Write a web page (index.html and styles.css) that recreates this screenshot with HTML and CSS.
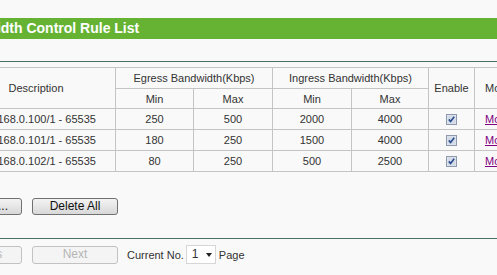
FILE: index.html
```html
<!DOCTYPE html>
<html lang="en">
  <head>
    <meta charset="UTF-8" />
    <meta name="viewport" content="width=device-width, initial-scale=1.0" />
    <title>Bandwidth Control Rule List</title>
    <link rel="stylesheet" href="styles.css">
  </head>
  <body>
    <div class="rule-list-container">
      <h1 class="title-bar">Bandwidth Control Rule List</h1>
      <div class="divider top-divider"></div>

      <table class="rule-table">
        <colgroup>
          <col style="width: 20px" />
          <col style="width: 159px" />
          <col style="width: 78px" />
          <col style="width: 79px" />
          <col style="width: 79px" />
          <col style="width: 77px" />
          <col style="width: 46px" />
          <col style="width: 60px" />
        </colgroup>
        <thead>
          <tr class="head-top">
            <th rowspan="2">ID</th>
            <th rowspan="2">Description</th>
            <th colspan="2">Egress Bandwidth(Kbps)</th>
            <th colspan="2">Ingress Bandwidth(Kbps)</th>
            <th rowspan="2">Enable</th>
            <th rowspan="2" class="left-cell">Modify</th>
          </tr>
          <tr class="head-sub">
            <th>Min</th>
            <th>Max</th>
            <th>Min</th>
            <th>Max</th>
          </tr>
        </thead>
        <tbody id="ruleRows"></tbody>
      </table>

      <div class="button-row">
        <button type="button" class="btn">Add New...</button>
        <button type="button" class="btn">Delete All</button>
      </div>

      <div class="divider bottom-divider"></div>

      <div class="pager-row">
        <button type="button" class="btn" disabled>Previous</button>
        <button type="button" class="btn" disabled>Next</button>
        <span class="pager-label">Current No.</span>
        <span class="page-select">1<span class="select-arrow"></span></span>
        <span class="pager-label">Page</span>
      </div>
    </div>

    <script>
      const rules = [
        { id: 1, desc: "192.168.0.100/1 - 65535", eMin: 250, eMax: 500, iMin: 2000, iMax: 4000 },
        { id: 2, desc: "192.168.0.101/1 - 65535", eMin: 180, eMax: 250, iMin: 1500, iMax: 4000 },
        { id: 3, desc: "192.168.0.102/1 - 65535", eMin: 80, eMax: 250, iMin: 500, iMax: 2500 },
      ];

      const checkIcon =
        '<svg class="check-box" width="11" height="11" viewBox="0 0 11 11">' +
        '<rect x="0.5" y="0.5" width="10" height="10" fill="#e4e8f0" stroke="#8e99ab"/>' +
        '<rect x="1.5" y="1.5" width="8" height="8" fill="#d3dbe8"/>' +
        '<path d="M2.8 5.4 L4.6 7.4 L8.2 2.8" fill="none" stroke="#2b4c8c" stroke-width="1.6"/>' +
        "</svg>";

      const body = document.getElementById("ruleRows");
      rules.forEach((r) => {
        const tr = document.createElement("tr");
        tr.innerHTML =
          `<td>${r.id}</td><td>${r.desc}</td>` +
          `<td>${r.eMin}</td><td>${r.eMax}</td>` +
          `<td>${r.iMin}</td><td>${r.iMax}</td>` +
          `<td>${checkIcon}</td>` +
          `<td class="left-cell"><a href="#" class="link">Modify</a></td>`;
        body.appendChild(tr);
      });
    </script>
  </body>
</html>
```

FILE: styles.css
```css
html,
body {
  margin: 0;
  background-color: #f9f9f9;
  overflow: hidden;
}
body {
  font-family: "Liberation Sans", Arial, sans-serif;
  color: #333333;
}
.rule-list-container {
  margin-left: -64px;
  padding-top: 18px;
  width: 640px;
}
.title-bar {
  margin: 0;
  height: 21px;
  line-height: 21px;
  padding-left: 15px;
  background-color: #66b334;
  color: #ffffff;
  font-size: 14px;
  font-weight: bold;
}
.divider {
  height: 1px;
  background-color: #47705e;
}
.top-divider {
  margin-top: 22px;
}
.bottom-divider {
  margin-top: 23px;
}
.rule-table {
  margin-top: 5px;
  border-collapse: collapse;
  table-layout: fixed;
  width: 598px;
  font-size: 11px;
  color: #333333;
}
.rule-table th,
.rule-table td {
  border: 1px solid #c4c4c4;
  padding: 0;
  text-align: center;
  font-weight: normal;
  white-space: nowrap;
  overflow: hidden;
}
.rule-table .head-top th {
  height: 20px;
}
.rule-table .head-sub th {
  height: 19px;
}
.rule-table td {
  height: 20px;
}
.rule-table .left-cell {
  text-align: left;
  padding-left: 10px;
}
.check-box {
  display: block;
  margin: 0 auto;
}
.link {
  color: #800080;
  text-decoration: underline;
}
.button-row {
  margin-top: 26px;
  display: flex;
  gap: 10px;
}
.btn {
  width: 86px;
  height: 17px;
  padding: 0;
  border: 1px solid #707070;
  border-radius: 3px;
  background: linear-gradient(#f3f3f3, #e6e6e6 50%, #d8d8d8);
  font-family: "Liberation Sans", Arial, sans-serif;
  font-size: 12px;
  line-height: 15px;
  color: #111111;
}
.btn:disabled {
  border-color: #c2c2c2;
  background: #f4f4f4;
  color: #b4b4b4;
}
.pager-row {
  margin-top: 6px;
  display: flex;
  align-items: center;
  gap: 10px;
}
.pager-row .btn {
  height: 18px;
}
.pager-label {
  font-size: 11px;
  color: #333333;
}
.pager-row .pager-label:first-of-type {
  margin-left: -1px;
}
.page-select {
  box-sizing: border-box;
  width: 30px;
  height: 19px;
  margin-left: -8px;
  margin-right: -7px;
  padding-left: 5px;
  border: 1px solid #d6d6d6;
  background-color: #ffffff;
  font-size: 12px;
  line-height: 17px;
  display: flex;
  align-items: center;
  gap: 7px;
}
.select-arrow {
  width: 0;
  height: 0;
  border-left: 3px solid transparent;
  border-right: 3px solid transparent;
  border-top: 4px solid #222222;
}
```
